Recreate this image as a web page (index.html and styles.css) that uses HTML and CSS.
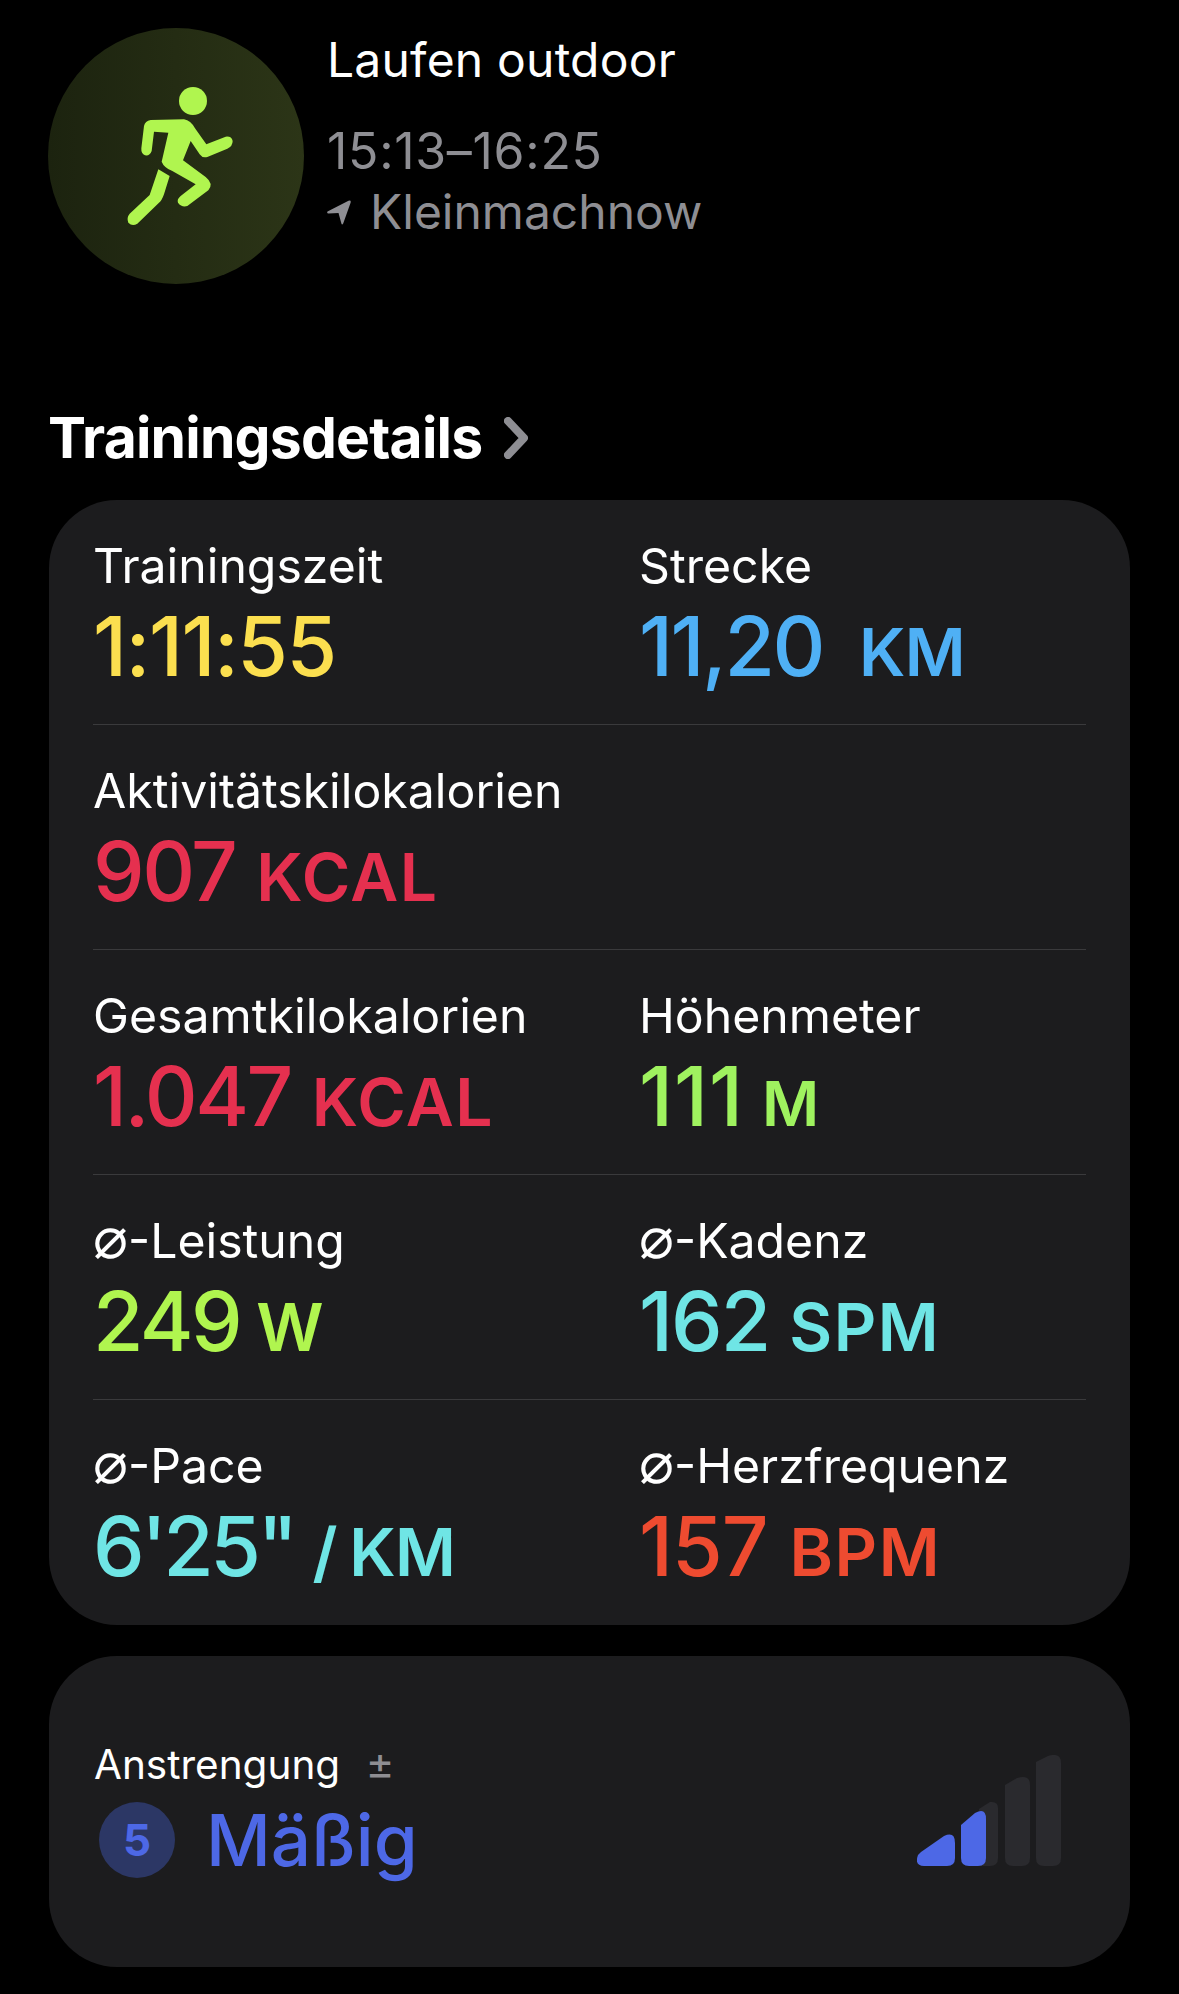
FILE: index.html
```html
<!DOCTYPE html>
<html lang="de">
<head>
<meta charset="utf-8">
<title>Laufen outdoor</title>
<link rel="stylesheet" href="styles.css">
</head>
<body>
<main class="page">
  <header class="workout">
    <div class="badge">
      <svg class="runner" width="140" height="170" viewBox="0 0 420 510" aria-hidden="true">
        <circle cx="252" cy="90" r="42"/>
        <path d="M125 147 L225 145 Q245 148 258 172 L292 220 L350 197 Q368 195 371 210 Q371 226 355 233 L295 258 Q280 262 272 250 L245 210 L222 268 L290 318 Q315 338 298 358 L235 405 Q218 410 207 395 Q203 385 215 375 L260 340 L190 300 Q165 290 158 272 L178 185 L135 182 L128 240 Q122 256 108 253 Q96 248 97 232 L105 165 Q108 150 125 147 Z"/>
        <path d="M148 295 L182 315 L165 370 Q158 390 150 395 L85 458 Q70 468 58 455 Q52 440 62 428 L122 372 Z"/>
      </svg>
    </div>
    <div class="workout-text">
      <div class="workout-name">Laufen outdoor</div>
      <div class="workout-time">15:13–16:25</div>
      <div class="workout-place">
        <svg class="arrow" width="24" height="25" viewBox="0 0 24 25" aria-hidden="true"><path d="M0.500 11.500 L21.500 0.800 Q24.500 -0.200 23.500 3 L16.200 23.500 Q15 25.500 14.400 23.500 L11.500 13 L1.500 13.500 Q-0.500 13 0.500 11.500 Z"/></svg>
        <span>Kleinmachnow</span>
      </div>
    </div>
  </header>

  <h2 class="section-title">Trainingsdetails
    <svg class="chevron" width="24" height="42" viewBox="0 0 24 42" aria-hidden="true"><path d="M4 4 L20 21 L4 38"/></svg>
  </h2>

  <section class="card metrics">
    <div class="row">
      <div class="metric"><div class="label">Trainingszeit</div><div class="value yellow time">1:11:55</div></div>
      <div class="metric"><div class="label">Strecke</div><div class="value blue">11,20<span class="unit km wide">KM</span></div></div>
    </div>
    <div class="row">
      <div class="metric"><div class="label">Aktivitätskilokalorien</div><div class="value red">907<span class="unit kcal">KCAL</span></div></div>
    </div>
    <div class="row">
      <div class="metric"><div class="label">Gesamtkilokalorien</div><div class="value red">1.047<span class="unit kcal">KCAL</span></div></div>
      <div class="metric"><div class="label">Höhenmeter</div><div class="value green ones">111<span class="unit meter">M</span></div></div>
    </div>
    <div class="row">
      <div class="metric"><div class="label"><span class="avg">⌀</span>-Leistung</div><div class="value lime">249<span class="unit watt">W</span></div></div>
      <div class="metric"><div class="label"><span class="avg">⌀</span>-Kadenz</div><div class="value cyan cadence">162<span class="unit">SPM</span></div></div>
    </div>
    <div class="row">
      <div class="metric"><div class="label"><span class="avg">⌀</span>-Pace</div><div class="value cyan pace">6'25"<span class="unit km">/ KM</span></div></div>
      <div class="metric"><div class="label"><span class="avg">⌀</span>-Herzfrequenz</div><div class="value orange">157<span class="unit">BPM</span></div></div>
    </div>
  </section>

  <section class="card effort">
    <div class="effort-text">
      <div class="effort-label">Anstrengung <span class="plusminus">±</span></div>
      <div class="effort-value"><span class="effort-score">5</span><span class="effort-word">Mäßig</span></div>
    </div>
    <svg class="bars" width="146" height="112" viewBox="0 0 146 112" aria-hidden="true">
      <path class="bar-off" d="M62 54 L73 47 Q81 46 81 53 V103 Q81 111 73 111 H62 Z"/>
      <path class="bar-off" d="M88 30 L100 23 Q113 19 113 30 V103 Q113 111 105 111 H96 Q88 111 88 103 Z"/>
      <path class="bar-off" d="M119 7 L131 1 Q144 -3 144 8 V103 Q144 111 136 111 H127 Q119 111 119 103 Z"/>
      <path class="bar-on" d="M4 97 L27 81 Q38 76 38 88 V103 Q38 111 30 111 H7 Q-3 111 1 100 Z"/>
      <path class="bar-on" d="M44 70 L58 58 Q69 52 69 64 V103 Q69 111 61 111 H52 Q44 111 44 103 Z"/>
    </svg>
  </section>
</main>
</body>
</html>
```
FILE: styles.css
```css
* { box-sizing: border-box; }
html, body { margin: 0; background: #000; }
body { font-family: Inter, "Liberation Sans", sans-serif; color: #fff; }
.page { width: 1179px; height: 1994px; padding: 28px 49px 0; overflow: hidden; }

.workout { display: flex; gap: 23px; height: 256px; margin-left: -1px; }
.badge { width: 256px; height: 256px; flex: none; border-radius: 50%; background: linear-gradient(90deg, #1c230f, #2c3517); display: flex; align-items: center; justify-content: center; }
.runner { margin-left: 6px; fill: #b0f54f; }
.workout-text { display: flex; flex-direction: column; font-size: 48px; line-height: 60px; }
.workout-name { margin-top: 2px; letter-spacing: .2px; }
.workout-time { margin-top: 31px; color: #8e8e93; font-size: 50px; letter-spacing: .7px; }
.workout-place { margin-top: 1px; color: #8e8e93; display: flex; align-items: center; gap: 19px; }
.arrow { fill: #8e8e93; flex: none; }

.section-title { display: flex; align-items: center; gap: 22px; margin: 121px 0 0 -1px; font-size: 57px; line-height: 66px; font-weight: 700; letter-spacing: -.8px; }
.chevron { fill: none; stroke: #8e8e93; stroke-width: 8; stroke-linecap: round; stroke-linejoin: round; }

.card { background: #1c1c1e; border-radius: 68px; }
.metrics { margin-top: 29px; padding: 0 44px; height: 1125px; }
.row { display: grid; grid-template-columns: 546px 1fr; height: 225px; padding-top: 36px; border-bottom: 1px solid #3a3a3c; }
.row:last-child { border-bottom: 0; }
.label { font-size: 48.2px; line-height: 60px; white-space: nowrap; }
.avg { font-size: 58px; line-height: 0; }
.value { margin-top: 5px; font-size: 82px; line-height: 92px; font-weight: 500; letter-spacing: -2.5px; white-space: nowrap; }
.time { letter-spacing: -1.5px; }
.ones { letter-spacing: 1px; }
.pace { letter-spacing: -3.5px; }
.cadence { letter-spacing: -2px; }
.unit { margin-left: 20px; font-size: 66px; font-weight: 600; letter-spacing: 1.5px; }
.unit.km { margin-left: 18px; letter-spacing: -.5px; word-spacing: -4px; }
.unit.wide { margin-left: 36px; }
.unit.kcal { margin-left: 21px; }
.unit.meter { margin-left: 18px; font-size: 62px; }
.unit.watt { margin-left: 16px; }
.yellow { color: #fbdf4f; }
.blue { color: #4fb0f5; }
.red { color: #e5304f; }
.green { color: #9ff25f; }
.lime { color: #b0f54f; }
.cyan { color: #6fe5e5; }
.orange { color: #ee4b30; letter-spacing: -1px; }
.orange .unit { margin-left: 22px; }

.effort { margin-top: 31px; height: 311px; padding: 83px 67px 0 45px; display: flex; align-items: flex-start; justify-content: space-between; }
.effort-label { font-size: 40.5px; line-height: 48px; }
.plusminus { margin-left: 14px; color: #8e8e93; font-size: 44px; }
.effort-value { display: flex; align-items: center; gap: 31px; margin: 11px 0 0 5px; }
.effort-score { width: 76px; height: 76px; border-radius: 50%; background: #2c3765; color: #4d68e6; font-size: 44px; font-weight: 700; display: flex; align-items: center; justify-content: center; }
.effort-word { font-size: 71px; line-height: 80px; font-weight: 500; color: #4d68e6; }
.bars { margin-top: 16px; }
.bar-on { fill: #4d68e6; }
.bar-off { fill: #2a2a2e; }
```
